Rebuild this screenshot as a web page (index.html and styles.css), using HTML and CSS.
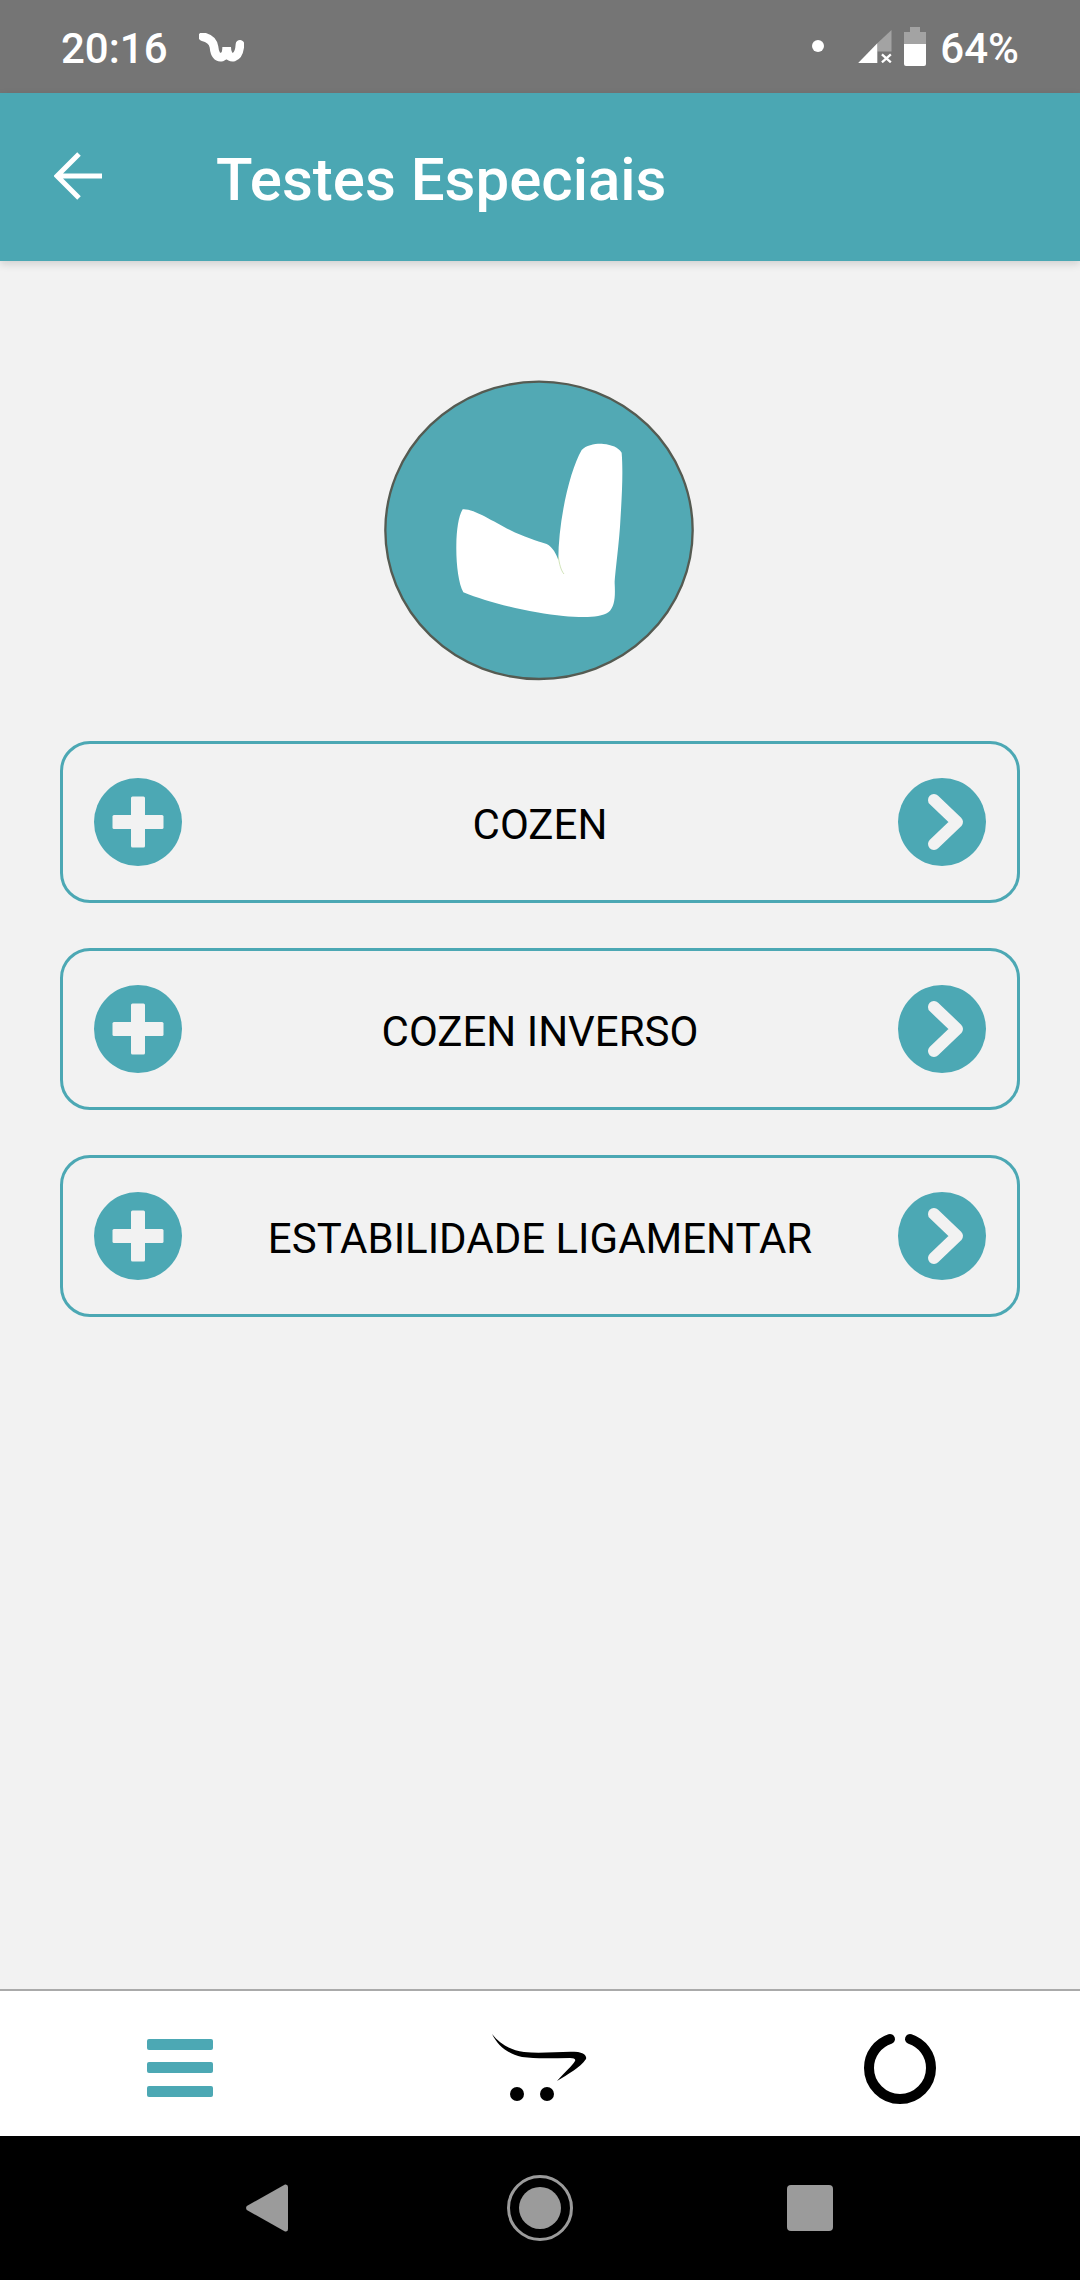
FILE: index.html
```html
<!DOCTYPE html>
<html lang="en">
<head>
  <meta charset="UTF-8">
  <meta name="viewport" content="width=device-width, initial-scale=1.0">
  <title>Testes Especiais</title>
  <link rel="stylesheet" href="styles.css">
</head>
<body>
  <div class="statusBar">
    <span class="statusText">20:16</span>
    <svg class="wishIcon" width="45" height="29" viewBox="475 68 135 87">
      <path d="M486 79C506 83 517 92 520 110C522 132 530 143 544 140C555 137 558 125 558 110C558 132 567 143 580 140C592 136 597 118 598 102" fill="none" stroke="#fff" stroke-width="26" stroke-linecap="round"/>
    </svg>
    <span class="statusSpacer"></span>
    <span class="statusDot"></span>
    <svg class="signalIcon" width="34" height="33" viewBox="237 60 102 100">
      <path d="M295 100L338 60V125H295Z" fill="#a3a3a3"/>
      <path d="M237 160L295 100V160Z" fill="#fff"/>
      <path d="M309 134L336 158M336 134L309 158" stroke="#fff" stroke-width="7" fill="none"/>
    </svg>
    <svg class="batteryIcon" width="22" height="39" viewBox="0 0 22 39">
      <path d="M6 0H16V5H22V17H0V5H6Z" fill="#a3a3a3"/>
      <path d="M0 17H22V37Q22 39 20 39H2Q0 39 0 37Z" fill="#fff"/>
    </svg>
    <span class="statusText">64%</span>
  </div>

  <div class="appBar">
    <svg class="backArrow" width="48" height="48" viewBox="0 0 48 48">
      <path d="M48 24H3M25 2L3 24L25 46" fill="none" stroke="#fff" stroke-width="5"/>
    </svg>
    <h1 class="appTitle">Testes Especiais</h1>
  </div>

  <div class="content">
    <svg class="armImage" width="360" height="330" viewBox="0 0 1080 990">
      <ellipse cx="537" cy="511" rx="461" ry="446" fill="#52a9b4" stroke="#555b52" stroke-width="7"/>
      <path d="M308 448C340 445 400 485 450 510C490 530 530 543 560 552C578 560 590 585 595 600C595 480 630 330 665 270C680 255 710 250 730 252C755 254 775 262 785 278C790 340 785 420 780 500C775 570 765 640 764 670C766 710 765 740 745 757C720 775 660 772 610 768C520 760 390 730 310 697C295 670 288 610 289 555C290 510 295 470 308 448Z" fill="#fff"/>
      <path d="M595 590C598 612 603 632 612 642" fill="none" stroke="#b9d596" stroke-width="2"/>
    </svg>

    <div class="testList">
      <div class="testRow">
        <svg class="roundIcon" width="88" height="88" viewBox="0 0 88 88">
          <circle cx="44" cy="44" r="44" fill="#4ca8b4"/>
          <rect x="18.5" y="37" width="51" height="14" rx="1.5" fill="#f2f2f2"/>
          <rect x="37" y="18.5" width="14" height="51" rx="1.5" fill="#f2f2f2"/>
        </svg>
        <span class="testName">COZEN</span>
        <svg class="roundIcon" width="88" height="88" viewBox="0 0 88 88">
          <circle cx="44" cy="44" r="44" fill="#4ca8b4"/>
          <path d="M36 22L59 44L36 66" fill="none" stroke="#f2f2f2" stroke-width="12" stroke-linecap="round" stroke-linejoin="round"/>
        </svg>
      </div>
      <div class="testRow">
        <svg class="roundIcon" width="88" height="88" viewBox="0 0 88 88">
          <circle cx="44" cy="44" r="44" fill="#4ca8b4"/>
          <rect x="18.5" y="37" width="51" height="14" rx="1.5" fill="#f2f2f2"/>
          <rect x="37" y="18.5" width="14" height="51" rx="1.5" fill="#f2f2f2"/>
        </svg>
        <span class="testName">COZEN INVERSO</span>
        <svg class="roundIcon" width="88" height="88" viewBox="0 0 88 88">
          <circle cx="44" cy="44" r="44" fill="#4ca8b4"/>
          <path d="M36 22L59 44L36 66" fill="none" stroke="#f2f2f2" stroke-width="12" stroke-linecap="round" stroke-linejoin="round"/>
        </svg>
      </div>
      <div class="testRow">
        <svg class="roundIcon" width="88" height="88" viewBox="0 0 88 88">
          <circle cx="44" cy="44" r="44" fill="#4ca8b4"/>
          <rect x="18.5" y="37" width="51" height="14" rx="1.5" fill="#f2f2f2"/>
          <rect x="37" y="18.5" width="14" height="51" rx="1.5" fill="#f2f2f2"/>
        </svg>
        <span class="testName">ESTABILIDADE LIGAMENTAR</span>
        <svg class="roundIcon" width="88" height="88" viewBox="0 0 88 88">
          <circle cx="44" cy="44" r="44" fill="#4ca8b4"/>
          <path d="M36 22L59 44L36 66" fill="none" stroke="#f2f2f2" stroke-width="12" stroke-linecap="round" stroke-linejoin="round"/>
        </svg>
      </div>
    </div>
  </div>

  <div class="bottomNav">
    <svg width="66" height="58" viewBox="0 0 66 58">
      <rect y="0" width="66" height="11" rx="2" fill="#4ca8b4"/>
      <rect y="23" width="66" height="11" rx="2" fill="#4ca8b4"/>
      <rect y="47" width="66" height="11" rx="2" fill="#4ca8b4"/>
    </svg>
    <svg width="96" height="68" viewBox="0 0 96 68">
      <path d="M0 0C8 10 18 16 32 18C50 20 70 17 86 18C92 19 95 22 94 25C88 34 76 40 65 47C73 38 80 32 83 27C84 25 82 24 78 24C62 24 44 25 30 23C16 20 6 12 0 0Z" fill="#000"/>
      <circle cx="25" cy="60" r="7" fill="#000"/>
      <circle cx="55" cy="60" r="7" fill="#000"/>
    </svg>
    <svg width="74" height="74" viewBox="0 0 74 74">
      <path d="M27 8C15 12 6 23 6 37C6 54 20 68 37 68C54 68 68 54 68 37C68 23 59 12 47 8" fill="none" stroke="#000" stroke-width="10" stroke-linecap="round"/>
    </svg>
  </div>

  <div class="systemNav">
    <svg width="48" height="48" viewBox="0 0 48 48">
      <path d="M0.8 22L39 0.5Q42 0 42 3V45Q42 48 39 47.5L0.8 26Q-0.6 24 0.8 22Z" fill="#9b9b9b"/>
    </svg>
    <svg width="66" height="66" viewBox="0 0 66 66">
      <circle cx="33" cy="33" r="31.5" fill="none" stroke="#9b9b9b" stroke-width="3"/>
      <circle cx="33" cy="33" r="21" fill="#9b9b9b"/>
    </svg>
    <svg width="46" height="46" viewBox="0 0 46 46">
      <rect width="46" height="46" rx="4" fill="#9b9b9b"/>
    </svg>
  </div>
</body>
</html>
```

FILE: styles.css
```css
body {
  margin: 0;
  width: 1080px;
  height: 2280px;
  display: flex;
  flex-direction: column;
  background-color: #f2f2f2;
  font-family: Roboto, Arial, sans-serif;
  overflow: hidden;
}

.statusBar {
  height: 93px;
  flex-shrink: 0;
  display: flex;
  align-items: center;
  padding: 0 61px;
  background-color: #757575;
  color: white;
}

.statusText {
  font-size: 42px;
  font-weight: 500;
  line-height: 48px;
  margin-top: 5px;
}

.wishIcon {
  margin-left: 31px;
  margin-top: 2px;
}

.statusSpacer {
  flex: 1;
}

.statusDot {
  width: 12px;
  height: 12px;
  border-radius: 50%;
  background-color: white;
  margin-right: 34px;
  margin-top: -1px;
}

.signalIcon {
  margin-right: 12px;
}

.batteryIcon {
  margin-right: 14px;
}

.appBar {
  height: 168px;
  flex-shrink: 0;
  display: flex;
  align-items: center;
  padding-left: 54px;
  background-color: #4ba7b3;
  box-shadow: 0 3px 8px rgba(0, 0, 0, 0.14);
}

.backArrow {
  margin-top: -2px;
}

.appTitle {
  margin: 0 0 0 114px;
  padding-top: 4px;
  font-size: 60px;
  font-weight: 500;
  color: white;
}

.content {
  flex: 1;
  display: flex;
  flex-direction: column;
  align-items: center;
  padding-top: 99px;
}

.armImage {
  margin-bottom: 51px;
}

.testList {
  width: 960px;
  display: flex;
  flex-direction: column;
  gap: 45px;
}

.testRow {
  height: 162px;
  box-sizing: border-box;
  display: flex;
  align-items: center;
  justify-content: space-between;
  padding: 0 31px;
  border: 3px solid #4ca8b4;
  border-radius: 30px;
}

.testName {
  font-size: 42px;
  margin-top: 5px;
  color: #000;
}

.bottomNav {
  height: 147px;
  flex-shrink: 0;
  box-sizing: border-box;
  display: grid;
  grid-template-columns: repeat(3, 1fr);
  align-items: center;
  justify-items: center;
  padding-top: 9px;
  border-top: 2px solid #aaaaaa;
  background-color: white;
}

.systemNav {
  height: 144px;
  flex-shrink: 0;
  display: grid;
  grid-template-columns: repeat(3, 270px);
  justify-content: center;
  align-items: center;
  justify-items: center;
  background-color: black;
}
```
